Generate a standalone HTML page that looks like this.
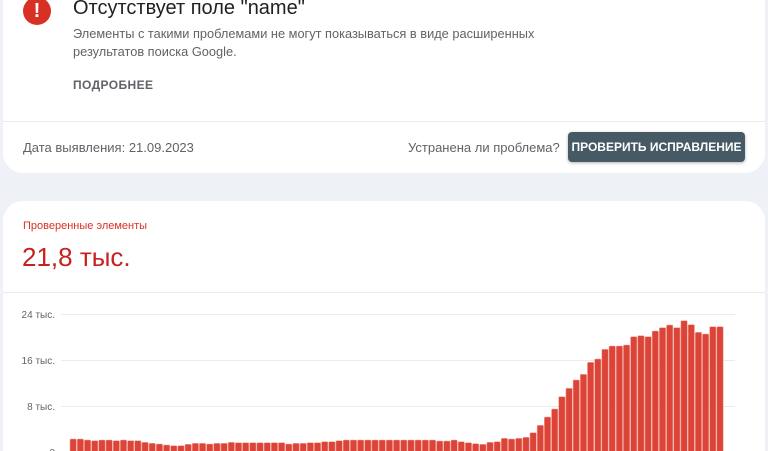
<!DOCTYPE html>
<html><head><meta charset="utf-8"><style>
html,body{margin:0;width:768px;height:451px;overflow:hidden}
body{background:#eef1f6;font-family:"Liberation Sans",Roboto,sans-serif;position:relative}
.c1{position:absolute;left:3px;top:-20px;width:762px;height:193px;background:#fff;border-radius:0 0 20px 20px}
.c2{position:absolute;left:3px;top:201px;width:762px;height:250px;background:#fff;border-radius:20px 20px 0 0}
.ic{position:absolute;left:23px;top:-3px;width:28px;height:28px;border-radius:50%;background:#d93025;color:#fff;font-weight:bold;font-size:20px;text-align:center;line-height:28px}
.t{position:absolute;font-size:13px;color:#5f6368;white-space:nowrap}
</style></head><body>
<div class="c1"></div>
<div class="c2"></div>
<div class="ic">!</div>
<div class="t" style="left:73px;top:-3px;font-size:20px;color:#202124">Отсутствует поле "name"</div>
<div class="t" style="left:73px;top:25px;line-height:18px;font-size:12.8px">Элементы с такими проблемами не могут показываться в виде расширенных<br>результатов поиска Google.</div>
<div class="t" style="left:73px;top:78px;font-size:12px;font-weight:bold;letter-spacing:.4px">ПОДРОБНЕЕ</div>
<div style="position:absolute;left:3px;top:121px;width:762px;height:1px;background:#e8eaed"></div>
<div class="t" style="left:23px;top:140px">Дата выявления: 21.09.2023</div>
<div class="t" style="left:408px;top:140px">Устранена ли проблема?</div>
<div style="position:absolute;left:568px;top:132px;width:177px;height:30px;background:#455a64;border-radius:4px;color:#fff;font-size:12px;font-weight:bold;line-height:30px;text-align:center;box-shadow:0 1px 3px rgba(0,0,0,.3)">ПРОВЕРИТЬ ИСПРАВЛЕНИЕ</div>
<div class="t" style="left:23px;top:220px;font-size:11px;color:#d93025">Проверенные элементы</div>
<div class="t" style="left:22px;top:242px;font-size:26px;color:#c5221f">21,8 тыс.</div>
<div style="position:absolute;left:3px;top:292px;width:762px;height:1px;background:#e8eaed"></div>
<svg style="position:absolute;left:0;top:0" width="768" height="451" id="s">
<g font-size="10" fill="#5f6368" text-anchor="end" font-family="Liberation Sans,sans-serif">
<text x="55" y="318">24 тыс.</text><text x="55" y="364">16 тыс.</text><text x="55" y="410">8 тыс.</text><text x="55" y="456">0</text></g>
<g stroke="#ebebeb"><line x1="61" x2="735" y1="314.5" y2="314.5"/><line x1="61" x2="735" y1="360.5" y2="360.5"/><line x1="61" x2="735" y1="406.5" y2="406.5"/></g>
<g id="b" fill="#db4437" stroke="#f1a49c" stroke-width=".6"></g>
</svg>
<script>
var z=[447,447,450,452,450,450,452,450,452,452,457,460,462,465,467,467,463,460,460,462,460,460,457,458,458,458,458,458,458,458,462,460,460,458,458,455,455,452,450,450,450,450,450,450,450,450,
450,450,450,450,450,453,453,450,455,458,461,463,457,455,445,447,445,442,428,406,381,357,320,295,270,253,217,207,178,168,168,165,140,137,140,123,113,105,113,92,104,127,132,110,110];
var g=document.getElementById('b'),h='',w=654/z.length;
for(var i=0;i<z.length;i++){var y=290+z[i]/3;h+='<rect x="'+(70+i*w).toFixed(2)+'" y="'+y.toFixed(1)+'" width="'+(w-0.8).toFixed(2)+'" height="'+(460-y).toFixed(1)+'" rx="1"/>';}
g.innerHTML=h;
</script>
</body></html>
